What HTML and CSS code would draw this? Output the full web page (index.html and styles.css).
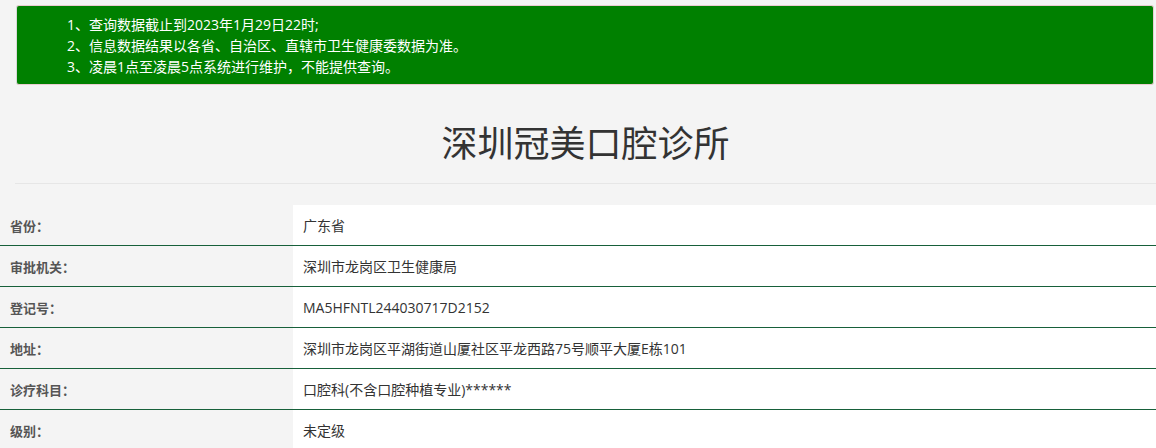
FILE: index.html
```html
<!DOCTYPE html>
<html lang="zh-CN">
<head>
<meta charset="utf-8">
<title>深圳冠美口腔诊所</title>
<link rel="stylesheet" href="styles.css">
</head>
<body>
<div class="notice">
  <ul class="notice-list">
    <li>1、查询数据截止到2023年1月29日22时;</li>
    <li>2、信息数据结果以各省、自治区、直辖市卫生健康委数据为准。</li>
    <li>3、凌晨1点至凌晨5点系统进行维护，不能提供查询。</li>
  </ul>
</div>
<div class="header">
  <h1 class="title">深圳冠美口腔诊所</h1>
</div>
<table class="info">
  <tr><th>省份：</th><td>广东省</td></tr>
  <tr><th>审批机关：</th><td>深圳市龙岗区卫生健康局</td></tr>
  <tr><th>登记号：</th><td>MA5HFNTL244030717D2152</td></tr>
  <tr><th>地址：</th><td>深圳市龙岗区平湖街道山厦社区平龙西路75号顺平大厦E栋101</td></tr>
  <tr><th>诊疗科目：</th><td>口腔科(不含口腔种植专业)******</td></tr>
  <tr><th>级别：</th><td>未定级</td></tr>
</table>
</body>
</html>
```
FILE: styles.css
```css
html, body {
  margin: 0;
  padding: 0;
  background: #f4f4f4;
  font-family: "Open Sans", "Noto Sans CJK SC", sans-serif;
  color: #333;
}
.notice {
  margin: 5px 2px 0 16px;
  height: 80px;
  box-sizing: border-box;
  background: #008000;
  border: 1px solid #ebccd1;
  border-left-color: #d8d8d8;
  border-radius: 3px;
  padding: 8px 0 0 0;
}
.notice-list {
  list-style: none;
  margin: 0;
  padding: 0 0 0 50px;
  color: #fff;
  font-size: 14px;
  line-height: 21px;
}
.header {
  margin: 0 0 21px 15px;
  border-bottom: 1px solid #e6e6e6;
  padding: 36px 0 16px;
  text-align: center;
}
.title {
  margin: 0;
  font-size: 36px;
  font-weight: 400;
  line-height: 46px;
  color: #333;
}
.info {
  width: 100%;
  border-collapse: collapse;
  background: #fff;
}
.info th, .info td {
  height: 40px;
  padding: 0 10px;
  border-bottom: 1px solid #17603a;
  vertical-align: middle;
  text-align: left;
}
.info th {
  width: 273px;
  background: #f4f4f4;
  font-size: 13px;
  font-weight: 700;
  color: #555;
}
.info td {
  font-size: 14px;
  color: #333;
}
```
